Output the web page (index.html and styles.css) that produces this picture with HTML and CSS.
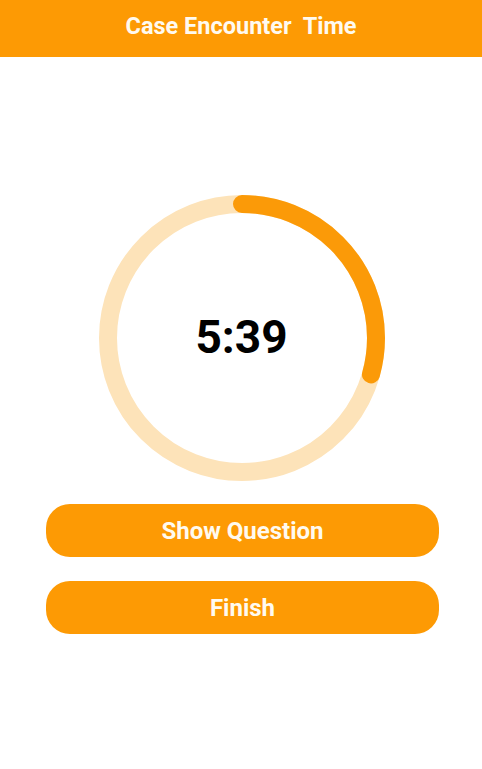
FILE: index.html
```html
<!DOCTYPE html>
<html>
<head>
<meta charset="utf-8">
<link rel="stylesheet" href="styles.css">
</head>
<body>
<header class="topbar">Case Encounter&nbsp; Time</header>
<main class="content">
  <div class="timer">
    <svg class="ring" width="286" height="286" viewBox="0 0 286 286">
      <circle class="track" cx="143" cy="143" r="134"/>
      <circle class="progress" cx="143" cy="143" r="134" stroke-dasharray="247.3 842" transform="rotate(-90 143 143)"/>
    </svg>
    <div class="time">5:39</div>
  </div>
  <button class="btn btn-first">Show Question</button>
  <button class="btn">Finish</button>
</main>
</body>
</html>
```
FILE: styles.css
```css
html, body {
  margin: 0;
  padding: 0;
  background: #ffffff;
  font-family: Roboto, "Liberation Sans", sans-serif;
}
.topbar {
  height: 57px;
  background: #fd9a04;
  color: #fffaf0;
  font-weight: 700;
  font-size: 23.5px;
  display: flex;
  align-items: center;
  justify-content: center;
  padding-bottom: 6px;
  box-sizing: border-box;
}
.content {
  display: flex;
  flex-direction: column;
  padding: 0 43px 0 46px;
}
.timer {
  display: grid;
  place-items: center;
  margin-top: 138px;
  margin-left: -2px;
}
.ring, .time {
  grid-area: 1 / 1;
}
.ring {
  display: block;
}
.track {
  fill: none;
  stroke: #fde3b9;
  stroke-width: 18;
}
.progress {
  fill: none;
  stroke: #fb9a08;
  stroke-width: 18;
  stroke-linecap: round;
}
.time {
  font-size: 46px;
  font-weight: 700;
  color: #000;
  padding-bottom: 2px;
}
.btn {
  height: 53px;
  border: none;
  border-radius: 24px;
  background: #fd9a04;
  color: #fffaf0;
  font-family: Roboto, "Liberation Sans", sans-serif;
  font-weight: 700;
  font-size: 24px;
  margin-top: 24px;
  padding: 0;
}
.btn-first {
  margin-top: 23px;
}
```
